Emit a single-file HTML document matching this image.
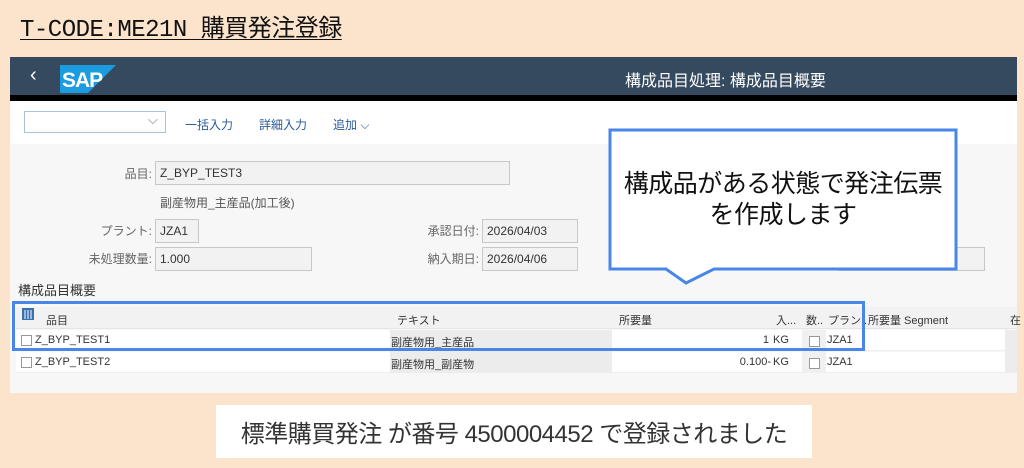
<!DOCTYPE html>
<html><head><meta charset="utf-8"><style>
*{margin:0;padding:0;box-sizing:border-box}
body{width:1024px;height:468px;background:#fce4cc;position:relative;overflow:hidden;font-family:"Liberation Sans","Noto Sans CJK JP",sans-serif;color:#333}
.a{position:absolute}
.title{left:20px;top:8px;font-family:"Liberation Mono","Noto Sans CJK JP",monospace;font-size:24px;color:#111;text-decoration:underline;text-underline-offset:3px;text-decoration-thickness:1px;letter-spacing:-0.5px}
.hdr{left:10px;top:57px;width:1007px;height:38px;background:#354a5f}
.blk{left:10px;top:95px;width:1007px;height:6px;background:#000}
.tb{left:10px;top:101px;width:1007px;height:43px;background:#fff}
.ct{left:10px;top:144px;width:1007px;height:249px;background:#f7f7f7}
.lbl{font-size:12px;color:#666;text-align:right;width:140px}
.inp{background:#f2f2f2;border:1px solid #c8c8c8;font-size:12px;color:#333;padding:4px 4px;height:24px}
.cell{font-size:11px;color:#333;position:absolute}
.cb{position:absolute;width:11px;height:11px;border:1px solid #999;background:#fff}
</style></head><body>
<div class="a title">T-CODE:ME21N 購買発注登録</div>
<div class="a hdr"></div>
<div class="a" style="left:30px;top:64px;color:#fff;font-size:20px">‹</div>
<svg class="a" style="left:60px;top:65px" width="56" height="28"><polygon points="0,0 56,0 28,28 0,28" fill="#1b9be0"/><text x="2" y="22" font-family="Liberation Sans" font-weight="bold" font-size="21" fill="#fff" letter-spacing="-1">SAP</text></svg>
<div class="a" style="left:625px;top:67px;color:#fff;font-size:16px">構成品目処理: 構成品目概要</div>
<div class="a blk"></div>
<div class="a tb"></div>
<div class="a" style="left:24px;top:111px;width:142px;height:22px;border:1px solid #a9c1de;background:#fff"></div>
<div class="a" style="left:148px;top:112px;font-size:13px;color:#777">⌵</div>
<div class="a" style="left:185px;top:116px;font-size:12px;color:#2a5b9a">一括入力</div>
<div class="a" style="left:259px;top:116px;font-size:12px;color:#2a5b9a">詳細入力</div>
<div class="a" style="left:333px;top:116px;font-size:12px;color:#2a5b9a">追加 ⌵</div>
<div class="a ct"></div>
<div class="a lbl" style="left:12px;top:165px">品目:</div>
<div class="a inp" style="left:155px;top:161px;width:355px">Z_BYP_TEST3</div>
<div class="a" style="left:160px;top:194px;font-size:12px;color:#555">副産物用_主産品(加工後)</div>
<div class="a lbl" style="left:12px;top:222px">プラント:</div>
<div class="a inp" style="left:155px;top:219px;width:44px">JZA1</div>
<div class="a lbl" style="left:12px;top:250px">未処理数量:</div>
<div class="a inp" style="left:155px;top:247px;width:157px">1.000</div>
<div class="a lbl" style="left:339px;top:222px">承認日付:</div>
<div class="a inp" style="left:482px;top:219px;width:96px">2026/04/03</div>
<div class="a lbl" style="left:339px;top:250px">納入期日:</div>
<div class="a inp" style="left:482px;top:247px;width:96px">2026/04/06</div>
<div class="a inp" style="left:838px;top:247px;width:147px"></div>
<div class="a" style="left:18px;top:280px;font-size:13px;color:#333">構成品目概要</div>
<div class="a" style="left:16px;top:307px;width:1001px;height:22px;background:#f2f2f2;border-bottom:1px solid #e5e5e5"></div>
<div class="a" style="left:16px;top:330px;width:1001px;height:21px;background:#fff;border-bottom:1px solid #eee"></div>
<div class="a" style="left:16px;top:352px;width:1001px;height:21px;background:#fff;border-bottom:1px solid #eee"></div>
<div class="a" style="left:390px;top:330px;width:222px;height:43px;background:#ececec"></div>
<div class="a" style="left:1005px;top:330px;width:12px;height:43px;background:#ececec"></div>
<div class="a" style="left:802px;top:330px;width:24px;height:43px;background:#f0f0f0"></div>
<svg class="a" style="left:21px;top:307px" width="14" height="14"><rect x="1" y="1" width="12" height="12" fill="#3a6fb0"/><path d="M4 3v9M7 3v9M10 3v9" stroke="#fff" stroke-width="1"/></svg>
<div class="cell" style="left:46px;top:312px">品目</div>
<div class="cell" style="left:397px;top:312px">テキスト</div>
<div class="cell" style="left:619px;top:312px">所要量</div>
<div class="cell" style="left:776px;top:312px">入...</div>
<div class="cell" style="left:806px;top:312px">数..</div>
<div class="cell" style="left:828px;top:312px">プラン..</div>
<div class="cell" style="left:868px;top:312px">所要量 Segment</div>
<div class="cell" style="left:1010px;top:312px">在</div>
<div class="cb" style="left:21px;top:335px"></div>
<div class="cb" style="left:21px;top:357px"></div>
<div class="cell" style="left:35px;top:334px">Z_BYP_TEST1</div>
<div class="cell" style="left:35px;top:356px">Z_BYP_TEST2</div>
<div class="cell" style="left:391px;top:334px">副産物用_主産品</div>
<div class="cell" style="left:391px;top:356px">副産物用_副産物</div>
<div class="cell" style="left:612px;top:334px;width:157px;text-align:right">1</div>
<div class="cell" style="left:612px;top:356px;width:159px;text-align:right">0.100-</div>
<div class="cell" style="left:773px;top:334px">KG</div>
<div class="cell" style="left:773px;top:356px">KG</div>
<div class="cb" style="left:809px;top:336px"></div>
<div class="cb" style="left:809px;top:358px"></div>
<div class="cell" style="left:827px;top:334px">JZA1</div>
<div class="cell" style="left:827px;top:356px">JZA1</div>
<div class="a" style="left:12px;top:301px;width:853px;height:50px;border:3px solid #4a86e8"></div>
<svg class="a" style="left:606px;top:126px" width="356" height="162"><polygon points="4,4 350,4 350,143 108,143 80,157 60,143 4,143" fill="#fff" stroke="#4a86e8" stroke-width="3"/></svg>
<div class="a" style="left:609px;top:169px;width:348px;text-align:center;font-size:25px;line-height:31px;color:#111;letter-spacing:-0.5px">構成品がある状態で発注伝票<br>を作成します</div>
<div class="a" style="left:216px;top:405px;width:596px;height:53px;background:#fff"></div>
<div class="a" style="left:216px;top:414px;width:596px;text-align:center;font-size:24px;color:#333;letter-spacing:-0.5px">標準購買発注 が番号 4500004452 で登録されました</div>
</body></html>
